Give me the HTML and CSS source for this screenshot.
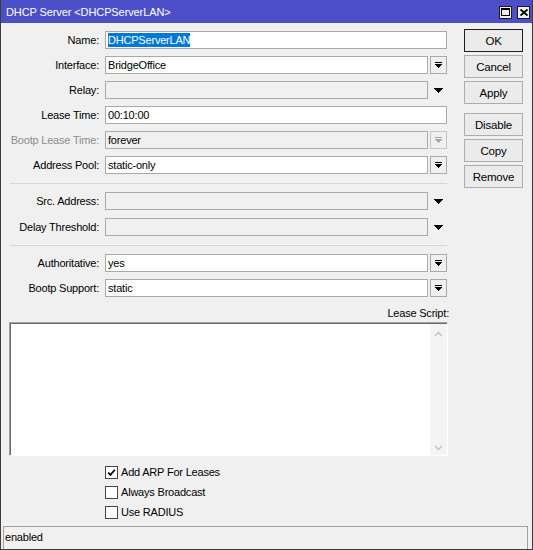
FILE: index.html
```html
<!DOCTYPE html>
<html>
<head>
<meta charset="utf-8">
<link rel="stylesheet" href="styles.css">
</head>
<body>
<div class="window">
  <div class="titlebar">
    <span class="title">DHCP Server &lt;DHCPServerLAN&gt;</span>
    <div class="tbtns">
      <span class="tbtn"><svg width="9" height="8" viewBox="0 0 9 8"><rect x="0.5" y="0.5" width="8" height="7" fill="none" stroke="#000"/><rect x="0" y="0" width="9" height="2" fill="#000"/></svg></span>
      <span class="tbtn"><svg width="8" height="7" viewBox="0 0 8 7"><path d="M0.5 0.5 L7.5 6.5 M7.5 0.5 L0.5 6.5" stroke="#000" stroke-width="1.8" fill="none"/></svg></span>
    </div>
  </div>
  <div class="top">
    <div class="form">
      <div class="row"><span class="lbl">Name:</span><div class="field"><span class="sel">DHCPServerLAN</span></div></div>
      <div class="row"><span class="lbl">Interface:</span><div class="field">BridgeOffice</div><span class="dd"><svg width="7" height="6" viewBox="0 0 7 6"><path d="M0 0h7v1H0zM0 2h7v1H0zM1 3h5v1H1zM2 4h3v1H2zM3 5h1v1H3z" fill="#000"/></svg></span></div>
      <div class="row"><span class="lbl">Relay:</span><div class="field dis"></div><span class="dd plain"><svg width="9" height="5" viewBox="0 0 9 5"><path d="M0 0h9v1H0zM1 1h7v1H1zM2 2h5v1H2zM3 3h3v1H3zM4 4h1v1H4z" fill="#000"/></svg></span></div>
      <div class="row"><span class="lbl">Lease Time:</span><div class="field">00:10:00</div></div>
      <div class="row"><span class="lbl dis">Bootp Lease Time:</span><div class="field dis">forever</div><span class="dd dis"><svg width="7" height="6" viewBox="0 0 7 6"><path d="M0 0h7v1H0zM0 2h7v1H0zM1 3h5v1H1zM2 4h3v1H2zM3 5h1v1H3z" fill="#a8a8a8"/></svg></span></div>
      <div class="row"><span class="lbl">Address Pool:</span><div class="field">static-only</div><span class="dd"><svg width="7" height="6" viewBox="0 0 7 6"><path d="M0 0h7v1H0zM0 2h7v1H0zM1 3h5v1H1zM2 4h3v1H2zM3 5h1v1H3z" fill="#000"/></svg></span></div>
      <div class="sep first"></div>
      <div class="row wide"><span class="lbl">Src. Address:</span><div class="field dis"></div><span class="dd plain"><svg width="9" height="5" viewBox="0 0 9 5"><path d="M0 0h9v1H0zM1 1h7v1H1zM2 2h5v1H2zM3 3h3v1H3zM4 4h1v1H4z" fill="#000"/></svg></span></div>
      <div class="row"><span class="lbl">Delay Threshold:</span><div class="field dis"></div><span class="dd plain"><svg width="9" height="5" viewBox="0 0 9 5"><path d="M0 0h9v1H0zM1 1h7v1H1zM2 2h5v1H2zM3 3h3v1H3zM4 4h1v1H4z" fill="#000"/></svg></span></div>
      <div class="sep second"></div>
      <div class="row"><span class="lbl">Authoritative:</span><div class="field">yes</div><span class="dd"><svg width="7" height="6" viewBox="0 0 7 6"><path d="M0 0h7v1H0zM0 2h7v1H0zM1 3h5v1H1zM2 4h3v1H2zM3 5h1v1H3z" fill="#000"/></svg></span></div>
      <div class="row"><span class="lbl">Bootp Support:</span><div class="field">static</div><span class="dd"><svg width="7" height="6" viewBox="0 0 7 6"><path d="M0 0h7v1H0zM0 2h7v1H0zM1 3h5v1H1zM2 4h3v1H2zM3 5h1v1H3z" fill="#000"/></svg></span></div>
    </div>
    <div class="buttons">
      <div class="btn default">OK</div>
      <div class="btn">Cancel</div>
      <div class="btn">Apply</div>
      <div class="btn spaced">Disable</div>
      <div class="btn">Copy</div>
      <div class="btn">Remove</div>
    </div>
  </div>
  <div class="script-label">Lease Script:</div>
  <div class="textarea">
    <div class="sb">
      <svg width="9" height="6" viewBox="0 0 9 6"><path d="M1 5 L4.5 1.5 L8 5" stroke="#c4c4c4" stroke-width="1.5" fill="none"/></svg>
      <svg width="9" height="6" viewBox="0 0 9 6"><path d="M1 1 L4.5 4.5 L8 1" stroke="#c4c4c4" stroke-width="1.5" fill="none"/></svg>
    </div>
  </div>
  <div class="checks">
    <div class="chk"><span class="box"><svg width="9" height="9" viewBox="0 0 9 9"><path d="M1.2 4.6 L3.5 6.9 L7.8 1.8" stroke="#000" stroke-width="1.7" fill="none"/></svg></span>Add ARP For Leases</div>
    <div class="chk"><span class="box"></span>Always Broadcast</div>
    <div class="chk"><span class="box"></span>Use RADIUS</div>
  </div>
  <div class="status">enabled</div>
</div>
</body>
</html>
```
FILE: styles.css
```css
body {
  margin: 0;
  font-family: "Liberation Sans", Arial, sans-serif;
  font-size: 11px;
  letter-spacing: -0.2px;
  color: #000;
}

.window {
  width: 533px;
  height: 550px;
  box-sizing: border-box;
  border: 1px solid #3c3c3c;
  border-top: none;
  background: #f0f0f0;
  display: flex;
  flex-direction: column;
}

.titlebar {
  height: 23px;
  flex: none;
  background: #4d4fc9;
  color: #fff;
  display: flex;
  align-items: center;
  padding-left: 5px;
  padding-top: 1px;
  box-sizing: border-box;
}

.title {
  letter-spacing: -0.1px;
}

.tbtns {
  margin-left: auto;
  margin-right: 2px;
  display: flex;
  gap: 5px;
}

.tbtn {
  width: 13px;
  height: 13px;
  box-sizing: border-box;
  border: 1px solid #1a1a1a;
  background: #eeeeee;
  display: flex;
  align-items: center;
  justify-content: center;
}

.top {
  display: flex;
  padding-top: 6px;
}

.form {
  width: 446px;
  margin-top: 2px;
  display: flex;
  flex-direction: column;
}

.row {
  display: flex;
  height: 18px;
  margin-bottom: 7px;
}

.row.wide {
  margin-bottom: 8px;
}

.lbl {
  width: 98px;
  flex: none;
  margin-right: 6px;
  text-align: right;
  line-height: 18px;
  white-space: nowrap;
}

.lbl.dis {
  color: #8d8d8d;
}

.field {
  flex: 1;
  box-sizing: border-box;
  height: 18px;
  border: 1px solid #a9a9a9;
  background: #fff;
  padding-left: 2px;
  line-height: 16px;
  white-space: nowrap;
  overflow: hidden;
}

.field.dis {
  background: #f0f0f0;
}

.sel {
  background: #0078d7;
  color: #fff;
  padding: 1px 0;
}

.dd {
  flex: none;
  width: 17px;
  height: 18px;
  margin-left: 2px;
  box-sizing: border-box;
  border: 1px solid #a9a9a9;
  background: #f0f0f0;
  display: flex;
  align-items: center;
  justify-content: center;
}

.dd.plain {
  border-color: transparent;
}

.dd.dis {
  border-color: #c6c6c6;
}

.sep {
  height: 1px;
  background: #d6d6d6;
  margin-left: 9px;
  margin-bottom: 8px;
}

.sep.first {
  margin-top: 2px;
}

.sep.second {
  margin-top: 2px;
}

.buttons {
  margin-left: 17px;
  width: 59px;
  display: flex;
  flex-direction: column;
  gap: 3px;
}

.btn {
  height: 23px;
  box-sizing: border-box;
  border: 1px solid #adadad;
  background: #ebebeb;
  display: flex;
  align-items: center;
  justify-content: center;
  font-size: 11.5px;
}

.btn.default {
  border-color: #1e1e1e;
}

.btn.spaced {
  margin-top: 6px;
}

.script-label {
  width: 448px;
  height: 14px;
  line-height: 14px;
  margin-top: 2px;
  text-align: right;
}

.textarea {
  margin-top: 2px;
  margin-left: 8px;
  width: 439px;
  height: 134px;
  box-sizing: border-box;
  border: 1px solid;
  border-color: #a0a0a0 #ffffff #ffffff #a0a0a0;
  box-shadow: inset 1px 1px 0 #6b6b6b;
  background: #fff;
  display: flex;
  justify-content: flex-end;
}

.sb {
  width: 17px;
  background: #f4f4f4;
  display: flex;
  flex-direction: column;
  justify-content: space-between;
  align-items: center;
  padding: 7px 0 4px;
  margin-top: 1px;
}

.checks {
  margin-top: 6px;
  margin-left: 104px;
  display: flex;
  flex-direction: column;
}

.chk {
  height: 20px;
  display: flex;
  align-items: center;
}

.box {
  width: 13px;
  height: 13px;
  box-sizing: border-box;
  border: 1px solid #444;
  background: #fff;
  margin-right: 3px;
  display: flex;
  align-items: center;
  justify-content: center;
}

.status {
  margin: auto 4px 0 2px;
  height: 23px;
  box-sizing: border-box;
  border-top: 1px solid #a0a0a0;
  border-right: 1px solid #a0a0a0;
  border-left: 1px solid #a0a0a0;
  padding-left: 1px;
  line-height: 21px;
}
```
